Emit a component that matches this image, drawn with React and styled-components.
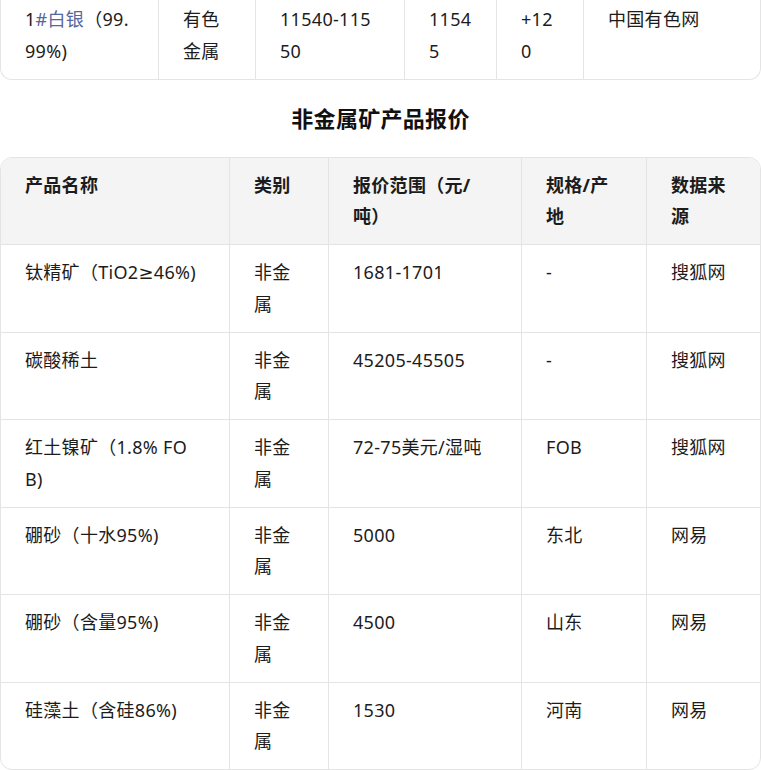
import React from 'react'
import styled, { createGlobalStyle } from 'styled-components'

const GlobalStyle = createGlobalStyle`
  body {
    margin: 0;
    background: #fff;
    color: #1c1c1c;
    font-family: "Noto Sans", "DejaVu Sans", "Noto Sans CJK SC", sans-serif;
  }
`

const metalCols = [157, 97, 149, 92, 87, 177]
const metalRow = ['1#白银（99.99%)', '有色金属', '11540-11550', '11545', '+120', '中国有色网']

const cols = [228, 99, 193, 125, 114]
const head = ['产品名称', '类别', '报价范围（元/吨）', '规格/产地', '数据来源']
const rows = [
  ['钛精矿（TiO2≥46%)', '非金属', '1681-1701', '-', '搜狐网'],
  ['碳酸稀土', '非金属', '45205-45505', '-', '搜狐网'],
  ['红土镍矿（1.8% FOB)', '非金属', '72-75美元/湿吨', 'FOB', '搜狐网'],
  ['硼砂（十水95%)', '非金属', '5000', '东北', '网易'],
  ['硼砂（含量95%)', '非金属', '4500', '山东', '网易'],
  ['硅藻土（含硅86%)', '非金属', '1530', '河南', '网易'],
]

const Page = styled.div`
  width: 761px;
  margin-top: -8px;
`

const Frame = styled.div`
  border: 1px solid #e4e4e4;
  border-radius: ${p => (p.$cut ? '0 0 12px 12px' : '12px')};
  border-top-width: ${p => (p.$cut ? '0' : '1px')};
  overflow: hidden;
`

const Table = styled.table`
  width: 100%;
  table-layout: fixed;
  border-collapse: separate;
  border-spacing: 0;
  font-size: 18px;
  letter-spacing: 0.3px;

  td:first-child,
  th:first-child {
    padding-right: ${p => p.$namePad || 24}px;
  }
`

const Cell = styled.td`
  padding: 12px 24px 11.5px;
  line-height: 31.5px;
  vertical-align: top;
  text-align: left;
  word-break: break-all;
  border-left: 1px solid #e4e4e4;
  border-top: ${p => (p.$first ? '0' : '1px solid #e4e4e4')};
  &:first-child {
    border-left: 0;
  }
`

const HeadCell = styled(Cell).attrs({ as: 'th' })`
  background: #f4f4f4;
  font-weight: 700;
`

const Tag = styled.span`
  color: #56679e;
`

const Title = styled.h2`
  margin: 0;
  padding: 22px 0 23px;
  text-align: center;
  font-size: 22px;
  line-height: 32px;
  font-weight: 700;
  letter-spacing: 0.3px;
  color: #111;
`

const renderName = text => {
  if (!text.includes('#')) return text
  const [num, rest] = text.split('#')
  return (
    <>
      {num}
      <Tag>#白银</Tag>
      {rest.replace('白银', '')}
    </>
  )
}

const App = () => {
  return (
    <Page>
      <GlobalStyle />
      <Frame $cut>
        <Table>
          <colgroup>
            {metalCols.map((w, i) => (
              <col key={i} style={{ width: w }} />
            ))}
          </colgroup>
          <tbody>
            <tr>
              {metalRow.map((v, i) => (
                <Cell key={i} $first>
                  {i === 0 ? renderName(v) : v}
                </Cell>
              ))}
            </tr>
          </tbody>
        </Table>
      </Frame>

      <Title>非金属矿产品报价</Title>

      <Frame>
        <Table $namePad={28}>
          <colgroup>
            {cols.map((w, i) => (
              <col key={i} style={{ width: w }} />
            ))}
          </colgroup>
          <thead>
            <tr>
              {head.map(h => (
                <HeadCell key={h} $first>
                  {h}
                </HeadCell>
              ))}
            </tr>
          </thead>
          <tbody>
            {rows.map((r, ri) => (
              <tr key={ri}>
                {r.map((v, i) => (
                  <Cell key={i}>{v}</Cell>
                ))}
              </tr>
            ))}
          </tbody>
        </Table>
      </Frame>
    </Page>
  )
}

export default App
